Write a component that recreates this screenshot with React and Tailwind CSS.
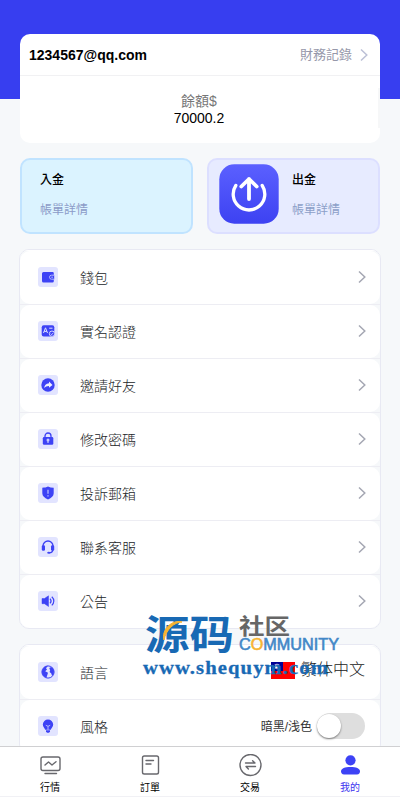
import React from "react";

const BLUE = "#3d42f5";

function Chevron({ className }) {
  return (
    <svg className={className} width="8" height="14" viewBox="0 0 8 14" fill="none" stroke="currentColor" strokeWidth="1.5">
      <path d="M1 1.5 6.8 7 1 12.5" />
    </svg>
  );
}

const glyphs = {
  wallet: (
    <>
      <path d="M5.5 5h9a1.3 1.3 0 0 1 1.3 1.3v8a1.3 1.3 0 0 1-1.3 1.2h-9a1.5 1.5 0 0 1-1.5-1.5V6.5A1.5 1.5 0 0 1 5.5 5Z" fill={BLUE} />
      <path d="M16.2 8.2h-2.7a2 2 0 0 0 0 4h2.7" fill={BLUE} stroke="#b3b7ff" />
      <path d="M13.3 10.2h1.6" stroke="#b3b7ff" />
    </>
  ),
  verify: (
    <>
      <rect x="3.7" y="4.2" width="12.6" height="11.4" rx="2" fill={BLUE} />
      <path d="m5.5 12 2-5.2 2 5.2M6.2 10.4h2.6M11.2 7.2h3.3" fill="none" stroke="#dcdfff" />
      <circle cx="14" cy="12.7" r="2.7" fill={BLUE} stroke="#dfe1ff" strokeWidth=".9" />
      <path d="m12.7 12.7 1 1 1.6-1.9" fill="none" stroke="#dfe1ff" strokeWidth=".8" />
    </>
  ),
  share: (
    <>
      <circle cx="10" cy="10" r="6.7" fill={BLUE} />
      <path d="M11 6.5 14.5 10 11 12.8v-1.9c-2.3 0-3.7.7-4.8 2.1.2-2.8 1.8-4.6 4.8-4.8Z" fill="#eef0ff" />
    </>
  ),
  lock: (
    <>
      <path d="M7 8.5V7a3 3 0 0 1 6 0v1.5" fill="none" stroke={BLUE} strokeWidth="1.3" />
      <rect x="4.8" y="8" width="10.5" height="7.8" rx="1.3" fill={BLUE} />
      <path d="M10 12v2" stroke="#c5c9ff" strokeWidth="1.2" />
      <circle cx="10" cy="11" r="1.5" fill="#c5c9ff" />
    </>
  ),
  shield: (
    <>
      <path d="M10 3.5c1.6.8 3.5 1.2 5.7 1.2v5.5c0 2.8-2.2 4.6-5.7 6.2-3.5-1.6-5.7-3.4-5.7-6.2V4.7c2.2 0 4.1-.4 5.7-1.2Z" fill={BLUE} />
      <path d="M10 6.7v4M10 12.2v1.4" stroke="#aeb2ff" strokeWidth="1.4" />
    </>
  ),
  headset: (
    <>
      <path d="M5 9.8V9a5 5 0 0 1 10 0v.8M14.8 12.5c0 2-1.5 3.3-3.7 3.4" fill="none" stroke={BLUE} strokeWidth="1.3" />
      <rect x="3.8" y="8.3" width="3.2" height="5.5" rx="1.3" fill={BLUE} />
      <rect x="13" y="8.3" width="3.2" height="5.5" rx="1.3" fill={BLUE} />
      <ellipse cx="10.7" cy="15.7" rx="1.5" ry="1" fill={BLUE} />
    </>
  ),
  speaker: (
    <>
      <path d="M4 7.5h2.5L10.5 4.8v10.7l-4-2.8H4Z" fill={BLUE} stroke={BLUE} strokeWidth=".5" strokeLinejoin="round" />
      <path d="M12 7.7c1.3 1.4 1.3 3.3 0 4.7M13.8 5.7c2.7 2.6 2.7 6 0 8.7" fill="none" stroke={BLUE} strokeWidth="1.2" />
    </>
  ),
  globe: (
    <>
      <circle cx="10" cy="10" r="6.1" fill="#e2e4ff" stroke={BLUE} strokeWidth="1" />
      <path d="M10 3.8 8 6.2l1 1.3-1.8 1.8 2.8 1.5-.6 2-1 2.9C5.3 14.8 3.8 12.6 4 9.7 4.3 6.5 6.8 4 10 3.8ZM12 5.2l2.5.3 1.5 3.3-.3 3.3-1.6 2-.8-2.7-1.7-1.3.6-2.2-.9-1.2Z" fill={BLUE} />
    </>
  ),
  bulb: (
    <>
      <path d="M10 3.4a5.2 5.2 0 0 1 5.2 5.1c0 2.4-1.8 3.3-2.4 5.2H7.2c-.6-1.9-2.4-2.8-2.4-5.2A5.2 5.2 0 0 1 10 3.4Z" fill={BLUE} />
      <path d="M8 14.3h4v1.2L11 16.7H9l-1-1.2Z" fill={BLUE} />
      <path d="m7.8 9.3 2.2 1 2.2-1M10 10.3v3.5" fill="none" stroke="#c0c4ff" strokeWidth=".9" />
    </>
  ),
};

function MenuIcon({ name }) {
  return (
    <svg className="shrink-0" width="20" height="20" viewBox="0 0 20 20">
      <rect width="20" height="20" rx="3" fill="#e2e4ff" />
      {glyphs[name]}
    </svg>
  );
}

function MenuRow({ icon, label, children }) {
  return (
    <div className="h-[54px] border-t border-[#ededf3] bg-[#f6f8fa] first:border-t-white">
      <div className="flex h-full items-center rounded-[10px] bg-white pb-px pl-[18px] pr-3.5">
        <MenuIcon name={icon} />
        <span className="ml-[22px] mt-0.5 flex-1 text-sm font-light text-[#222528]">{label}</span>
        {children || <Chevron className="text-[#a5a7b3]" />}
      </div>
    </div>
  );
}

const items = [
  ["wallet", "錢包"],
  ["verify", "實名認證"],
  ["share", "邀請好友"],
  ["lock", "修改密碼"],
  ["shield", "投訴郵箱"],
  ["headset", "聯系客服"],
  ["speaker", "公告"],
];

function Flag() {
  return (
    <svg width="24" height="17" viewBox="0 0 24 17">
      <path fill="#fe0000" d="M0 0h24v17H0z" />
      <path fill="#000095" d="M0 0h12v9H0z" />
      <path fill="#fff" d="m6 1.2.7 1.6 1.7-.7-.7 1.7 1.7.7-1.7.7.7 1.7-1.7-.7L6 7.8l-.7-1.6-1.7.7.7-1.7-1.7-.7 1.7-.7-.7-1.7 1.7.7Z" />
    </svg>
  );
}

function TransferIn() {
  return (
    <svg className="-ml-px mr-px shrink-0" width="60" height="60" viewBox="0 0 60 60" fill="none" strokeLinecap="round" strokeLinejoin="round">
      <defs>
        <linearGradient id="tile" x1="0" y1="0" x2="0" y2="1">
          <stop stopColor="#5b60ff" />
          <stop offset="1" stopColor="#3d42f2" />
        </linearGradient>
      </defs>
      <rect x=".3" y=".3" width="59.4" height="59.4" rx="15" fill="url(#tile)" />
      <path d="M16.8 21.5a15.8 15.8 0 1 0 26.4 0" stroke="#fff" strokeWidth="3.3" />
      <path d="M30 35V15M22.3 22.5 30 15l7.7 7.5" stroke="#fff" strokeWidth="3.8" />
    </svg>
  );
}

function Watermark() {
  return (
    <svg className="pointer-events-none absolute left-[140px] top-[608px] overflow-visible" width="204" height="76" viewBox="0 0 204 76">
      <g fontFamily="'Noto Sans CJK SC', sans-serif" fontWeight="700">
        <text x="5" y="40.5" fontSize="40" fill="#1869b4" textLength="89" lengthAdjust="spacingAndGlyphs">源码</text>
        <text x="99" y="25.5" fontSize="22" fill="#666" textLength="51" lengthAdjust="spacingAndGlyphs">社区</text>
      </g>
      <path d="M24 32c-3-10 8-21 18-18-8 0-16 8-18 18Z" fill="#f7b431" stroke="#f7b431" />
      <text x="99" y="42" fontFamily="'Liberation Sans', sans-serif" fontWeight="400" fontSize="16.5" fill="#4287c7" stroke="#4287c7" strokeWidth=".6" textLength="100" lengthAdjust="spacingAndGlyphs">
        C<tspan fill="#f7b431" stroke="#f7b431">O</tspan>MMUNITY
      </text>
      <text x="3" y="66" fontFamily="'Liberation Serif', serif" fontWeight="700" fontSize="19.5" letterSpacing="1" fill="#1869b4" stroke="#1869b4" strokeWidth=".3" textLength="186" lengthAdjust="spacingAndGlyphs">www.shequym.com</text>
    </svg>
  );
}

const tabIcons = {
  market: (
    <>
      <rect x="3" y="3" width="19" height="13.5" rx="2" />
      <path d="m7 11 3.5-3 3.5 3 4-3.2M7 19.5h11.5" />
    </>
  ),
  order: (
    <>
      <rect x="4.5" y="2" width="16" height="18" rx="1.8" />
      <path d="M8 6.5h7.5M8 10h5" />
    </>
  ),
  trade: (
    <>
      <circle cx="12.5" cy="11" r="10.5" />
      <path d="M7.5 9H17l-2.4-2.3M17.5 12.5H8l2.4 2.5" />
    </>
  ),
  mine: (
    <g fill={BLUE} stroke="none">
      <circle cx="12.5" cy="6.3" r="5.1" />
      <path d="M3 17.3c0-2.8 4-4.3 9.5-4.3s9.5 1.5 9.5 4.3c0 1.8-1 3.2-3 3.2H6c-2 0-3-1.4-3-3.2Z" />
    </g>
  ),
};

const tabs = [
  ["market", "行情"],
  ["order", "訂單"],
  ["trade", "交易"],
  ["mine", "我的"],
];

export default function App() {
  return (
    <div className="relative flex h-[797px] w-[400px] flex-col overflow-hidden bg-[#f6f8fa] font-['Liberation_Sans','Noto_Sans_CJK_TC',sans-serif] text-black">
      <div className="h-[99px] shrink-0 bg-[#373ef0]" />
      <main className="relative -mt-[65px] min-h-0 flex-1 overflow-hidden px-5">
        <section className="h-[109px] rounded-[10px] bg-white">
          <div className="flex h-[42px] items-center justify-between border-b border-[#f1f1f3] pl-[9px] pr-3">
            <b className="text-sm leading-5">1234567@qq.com</b>
            <div className="flex items-center gap-2 text-[13px] text-[#9698aa]">
              <span>財務記錄</span>
              <Chevron className="text-[#bcc0d6]" />
            </div>
          </div>
          <div className="mt-3 flex h-10 flex-col items-center border-r-2 border-[#f6f7f8] pt-[5px] text-sm leading-[17px]">
            <span className="text-[#777]">餘額$</span>
            <span>70000.2</span>
          </div>
        </section>

        <section className="mt-[15px] flex h-[76px] justify-between">
          <div className="flex w-[173px] flex-col rounded-[10px] border-2 border-[#c0e3ff] bg-[#dbf3ff] pl-[18px] pt-[11px] text-xs leading-[18px]">
            <span className="font-medium">入金</span>
            <span className="mt-3 text-[#8c9bc8]">帳單詳情</span>
          </div>
          <div className="flex w-[173px] rounded-[10px] border-2 border-[#dcdfff] bg-[#e7ebff] pl-[11px] pt-1">
            <TransferIn />
            <div className="ml-3 flex flex-col pt-[7px] text-xs leading-[18px]">
              <span className="font-medium">出金</span>
              <span className="mt-3 text-[#8c9fc8]">帳單詳情</span>
            </div>
          </div>
        </section>

        <section className="-mx-px mt-[15px] overflow-hidden rounded-[10px] border border-[#e8e9f3] bg-white">
          {items.map(([icon, label]) => (
            <MenuRow key={icon} icon={icon} label={label} />
          ))}
        </section>

        <section className="-mx-px mt-[15px] overflow-hidden rounded-[10px] border border-[#e8e9f3] bg-white">
          <MenuRow icon="globe" label="語言">
            <div className="-mt-1 mr-px flex items-center gap-1.5">
              <Flag />
              <span className="text-base font-light text-[#222]">繁体中文</span>
            </div>
          </MenuRow>
          <MenuRow icon="bulb" label="風格">
            <span className="mt-px text-xs text-[#333]">暗黑/浅色</span>
            <span className="ml-[5px] mr-px flex h-[26px] w-12 items-center rounded-full bg-[#dedede]">
              <span className="size-6 rounded-full bg-white shadow-[0_1px_2px_#777]" />
            </span>
          </MenuRow>
        </section>
      </main>

      <nav className="relative grid h-[51px] shrink-0 grid-cols-4 border-b border-t border-b-[#f1f1f5] border-t-[#d0d0d2] bg-white">
        {tabs.map(([icon, label]) => (
          <div key={icon} className="flex flex-col items-center pt-[7px]">
            <svg width="25" height="23" viewBox="0 0 25 23" fill="none" stroke="#68686d" strokeWidth="1.4" strokeLinecap="round" strokeLinejoin="round">
              {tabIcons[icon]}
            </svg>
            <span className={icon === "mine" ? "mt-1 text-[10px] leading-[14px] text-[#3d32ef]" : "mt-1 text-[10px] leading-[14px]"}>{label}</span>
          </div>
        ))}
      </nav>
      <Watermark />
    </div>
  );
}
